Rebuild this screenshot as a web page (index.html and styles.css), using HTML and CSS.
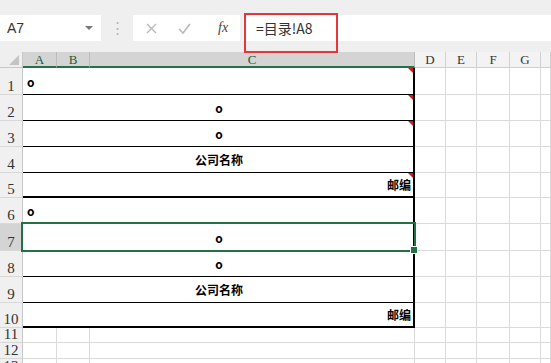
FILE: index.html
```html
<!DOCTYPE html>
<html lang="zh">
<head>
    <meta charset="UTF-8">
    <title>Sheet</title>
    <link rel="stylesheet" href="styles.css">
</head>
<body>
    <div class="toolbar">
        <div class="namebox">
            <span>A7</span>
            <span class="arrow"></span>
        </div>
        <div class="grip">&#8942;</div>
        <div class="fxbox">
            <svg width="11" height="11" viewBox="0 0 11 11"><path d="M1 1 L10 10 M10 1 L1 10" stroke="#b9b9b9" stroke-width="1.4" fill="none"/></svg>
            <svg width="13" height="11" viewBox="0 0 13 11"><path d="M1 6 L5 10 L12 1" stroke="#b9b9b9" stroke-width="1.6" fill="none"/></svg>
            <span class="fx">fx</span>
        </div>
        <div class="formula">=目录!A8</div>
        <div class="highlight"></div>
    </div>

    <div class="sheet">
        <div class="corner"></div>
        <div class="ch sel">A</div>
        <div class="ch sel">B</div>
        <div class="ch sel">C</div>
        <div class="ch">D</div>
        <div class="ch">E</div>
        <div class="ch">F</div>
        <div class="ch">G</div>
        <div class="ch"></div>

        <div class="rh">1</div>
        <div class="mc left note">o</div>
        <div class="c"></div><div class="c"></div><div class="c"></div><div class="c"></div><div class="c"></div>

        <div class="rh">2</div>
        <div class="mc note">o</div>
        <div class="c"></div><div class="c"></div><div class="c"></div><div class="c"></div><div class="c"></div>

        <div class="rh">3</div>
        <div class="mc note">o</div>
        <div class="c"></div><div class="c"></div><div class="c"></div><div class="c"></div><div class="c"></div>

        <div class="rh">4</div>
        <div class="mc">公司名称</div>
        <div class="c"></div><div class="c"></div><div class="c"></div><div class="c"></div><div class="c"></div>

        <div class="rh">5</div>
        <div class="mc right thick note">邮编</div>
        <div class="c"></div><div class="c"></div><div class="c"></div><div class="c"></div><div class="c"></div>

        <div class="rh">6</div>
        <div class="mc left">o</div>
        <div class="c"></div><div class="c"></div><div class="c"></div><div class="c"></div><div class="c"></div>

        <div class="rh sel">7</div>
        <div class="mc active">o</div>
        <div class="c"></div><div class="c"></div><div class="c"></div><div class="c"></div><div class="c"></div>

        <div class="rh">8</div>
        <div class="mc">o</div>
        <div class="c"></div><div class="c"></div><div class="c"></div><div class="c"></div><div class="c"></div>

        <div class="rh">9</div>
        <div class="mc">公司名称</div>
        <div class="c"></div><div class="c"></div><div class="c"></div><div class="c"></div><div class="c"></div>

        <div class="rh">10</div>
        <div class="mc right thick">邮编</div>
        <div class="c"></div><div class="c"></div><div class="c"></div><div class="c"></div><div class="c"></div>

        <div class="rh">11</div>
        <div class="c"></div><div class="c"></div><div class="c"></div>
        <div class="c"></div><div class="c"></div><div class="c"></div><div class="c"></div><div class="c"></div>

        <div class="rh">12</div>
        <div class="c"></div><div class="c"></div><div class="c"></div>
        <div class="c"></div><div class="c"></div><div class="c"></div><div class="c"></div><div class="c"></div>

        <div class="rh">13</div>
        <div class="c"></div><div class="c"></div><div class="c"></div>
        <div class="c"></div><div class="c"></div><div class="c"></div><div class="c"></div><div class="c"></div>
    </div>
</body>
</html>
```

FILE: styles.css
```css
* {
    box-sizing: border-box;
}

body {
    margin: 0;
    font-family: "Liberation Sans", "Noto Sans CJK SC", sans-serif;
    background-color: #fff;
    overflow: hidden;
}

.toolbar {
    position: relative;
    display: flex;
    height: 52px;
    padding: 15px 0 11px;
    background-color: #efefef;
}

.namebox {
    width: 101px;
    background: #fff;
    display: flex;
    align-items: center;
    justify-content: space-between;
    padding: 0 7px 0 7px;
    font-size: 14px;
    color: #333;
}

.arrow {
    width: 0;
    height: 0;
    border-left: 4px solid transparent;
    border-right: 4px solid transparent;
    border-top: 4px solid #777;
    margin-right: 1px;
}

.grip {
    width: 32px;
    text-align: center;
    color: #b5b5b5;
    font-size: 15px;
    line-height: 26px;
}

.fxbox {
    width: 107px;
    background: #fff;
    display: flex;
    align-items: center;
    padding-left: 13px;
    gap: 21px;
}

.fx {
    font-family: "Liberation Serif", serif;
    font-style: italic;
    font-size: 14px;
    color: #444;
    margin-left: 6px;
}

.formula {
    flex: 1;
    margin-left: 3px;
    background: #fff;
    padding-left: 13px;
    font-family: "Noto Sans CJK SC", sans-serif;
    font-size: 14px;
    line-height: 26px;
    color: #333;
}

.highlight {
    position: absolute;
    left: 244px;
    top: 13px;
    width: 94px;
    height: 40px;
    border: 2px solid #e8353c;
}

.sheet {
    display: grid;
    grid-template-columns: 23px 34px 33px 325px 31px 31px 33px 31px 1fr;
    grid-template-rows: 16px 27px 26px 26px 26px 25px 26px 27px 26px 26px 25px 15px 16px 16px;
}

.corner {
    position: relative;
    background: #efefef;
    border-right: 1px solid #c8c8c8;
    border-bottom: 1px solid #c8c8c8;
}

.corner::after {
    content: "";
    position: absolute;
    right: 3px;
    bottom: 2px;
    border-left: 10px solid transparent;
    border-bottom: 10px solid #c4c4c4;
}

.ch {
    background: #f3f3f3;
    border-right: 1px solid #d0d0d0;
    border-bottom: 1px solid #d0d0d0;
    font-family: "Liberation Serif", serif;
    font-size: 13px;
    line-height: 16px;
    text-align: center;
    color: #333;
}

.ch.sel {
    background: #d4d4d4;
    border-right-color: #bcbcbc;
    border-bottom: 2px solid #217346;
    color: #1f5a38;
}

.rh {
    background: #f0f0f0;
    border-right: 1px solid #c8c8c8;
    border-bottom: 1px solid #d8d8d8;
    font-family: "Liberation Serif", serif;
    font-size: 15px;
    display: flex;
    align-items: flex-end;
    justify-content: center;
    line-height: 15px;
    color: #333;
}

.rh.sel {
    background: #d4d4d4;
}

.c {
    border-right: 1px solid #dadada;
    border-bottom: 1px solid #dadada;
}

.mc {
    position: relative;
    grid-column: 2 / 5;
    border-right: 2px solid #000;
    border-bottom: 1px solid #000;
    display: flex;
    align-items: center;
    justify-content: center;
    padding: 0 2px 0 4px;
    font-family: "Noto Sans CJK SC", sans-serif;
    font-weight: bold;
    font-size: 12px;
    color: #000;
}

.mc.left {
    justify-content: flex-start;
}

.mc.right {
    justify-content: flex-end;
}

.mc.thick {
    border-bottom-width: 2px;
}

.note::before {
    content: "";
    position: absolute;
    top: 0;
    right: 0;
    border-left: 5px solid transparent;
    border-top: 5px solid #d11a1a;
}

.active::after {
    content: "";
    position: absolute;
    left: -2px;
    top: -2px;
    right: -3px;
    bottom: -2px;
    border: 2px solid #217346;
}

.active::before {
    content: "";
    position: absolute;
    right: -5px;
    bottom: -4px;
    width: 6px;
    height: 6px;
    background: #217346;
    border: 1px solid #fff;
    z-index: 2;
}
```
